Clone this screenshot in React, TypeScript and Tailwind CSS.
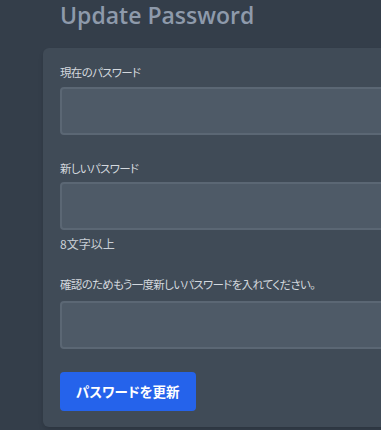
export default function App() {
  const jp = "font-['Noto_Sans_CJK_JP',sans-serif] [font-feature-settings:'palt']";
  const label = `block text-[11.5px] leading-[18px] tracking-[-0.7px] text-[#d3d8de] ${jp}`;
  const input = "h-[48px] rounded-[4px] border-2 border-[#5b6774] bg-[#4e5a67]";
  return (
    <div className="min-h-screen overflow-hidden bg-[#343e4a] pl-[43px]">
      <h2 className="pl-[17px] font-['Open_Sans',sans-serif] text-[23px] font-semibold leading-[30px] text-[#8e9aab]">
        Update Password
      </h2>
      <div className="mt-[18px] w-[400px] rounded-md bg-[#404b57] px-[17px] pt-[15px] pb-[16px] shadow-md">
        <label className={label}>現在のパスワード</label>
        <div className={`mt-[6px] ${input}`} />

        <label className={`mt-[24px] ${label}`}>新しいパスワード</label>
        <div className={`mt-[5px] ${input}`} />
        <p className={`mt-[5px] text-[12px] leading-[18px] text-[#c9cfd6] ${jp}`}>8文字以上</p>

        <label className={`mt-[22px] ${label}`}>
          確認のためもう一度新しいパスワードを入れてください。
        </label>
        <div className={`mt-[8px] ${input}`} />

        <button className={`mt-[23px] h-[39px] rounded-[4px] bg-[#2563eb] px-[16px] text-[13.5px] font-bold text-white ${jp}`}>
          パスワードを更新
        </button>
      </div>
    </div>
  );
}
